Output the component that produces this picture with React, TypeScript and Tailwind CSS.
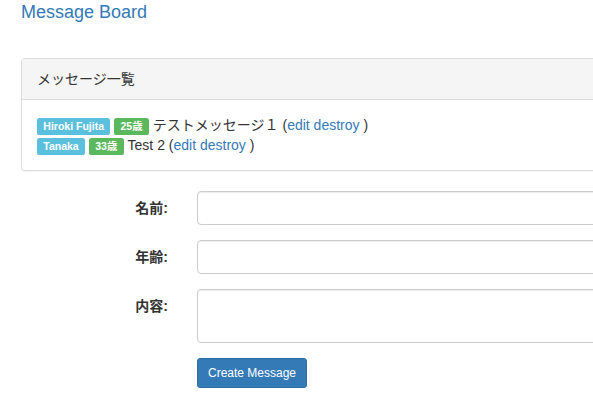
import React from "react";

const font = "font-['Liberation_Sans','Noto_Sans_CJK_JP',sans-serif]";

function Label({ color, children }: { color: string; children: React.ReactNode }) {
  return (
    <span
      className={`${color} inline text-white font-bold text-[10.5px] leading-none px-[6.3px] pt-[2.1px] pb-[3.15px] rounded-[2.6px] align-baseline`}
    >
      {children}
    </span>
  );
}

function Row({ label, children }: { label: string; children: React.ReactNode }) {
  return (
    <div className="flex mb-[15px]">
      <label className="w-[147px] shrink-0 text-right pt-[7px] font-bold">{label}</label>
      <div className="ml-[29px] shrink-0">{children}</div>
    </div>
  );
}

export default function App() {
  return (
    <div className={`w-[593px] h-[403px] overflow-hidden bg-white text-[14px] leading-[20px] text-[#333] ${font}`}>
      <div className="pl-[21px]">
        <h1 className="pt-[2px] text-[18px] leading-[20px] text-[#337ab7] font-normal">Message Board</h1>
        <div className="mt-[36px] mb-[20px] w-[640px] border border-[#ddd] rounded-[4px] shadow-[0_1px_1px_rgba(0,0,0,0.05)]">
          <div className="bg-[#f5f5f5] border-b border-[#ddd] px-[15px] py-[10px] rounded-t-[3px]">
            メッセージ一覧
          </div>
          <div className="p-[15px]">
            <div>
              <Label color="bg-[#5bc0de]">Hiroki Fujita</Label>{" "}
              <Label color="bg-[#5cb85c]">25歳</Label> テストメッセージ１ (
              <a className="text-[#337ab7]">edit</a> <a className="text-[#337ab7]">destroy</a> )
            </div>
            <div>
              <Label color="bg-[#5bc0de]">Tanaka</Label>{" "}
              <Label color="bg-[#5cb85c]">33歳</Label> Test 2 (
              <a className="text-[#337ab7]">edit</a> <a className="text-[#337ab7]">destroy</a> )
            </div>
          </div>
        </div>
        <form>
          <Row label="名前:">
            <input className="block w-[500px] h-[34px] border border-[#ccc] rounded-[4px] shadow-[inset_0_1px_1px_rgba(0,0,0,0.075)] px-[12px] outline-none" />
          </Row>
          <Row label="年齢:">
            <input className="block w-[500px] h-[34px] border border-[#ccc] rounded-[4px] shadow-[inset_0_1px_1px_rgba(0,0,0,0.075)] px-[12px] outline-none" />
          </Row>
          <Row label="内容:">
            <textarea
              rows={2}
              className="block w-[500px] h-[54px] border border-[#ccc] rounded-[4px] shadow-[inset_0_1px_1px_rgba(0,0,0,0.075)] px-[12px] py-[6px] outline-none resize-none"
            />
          </Row>
          <div className="ml-[176px]">
            <button
              type="button"
              className="bg-[#337ab7] border border-[#2e6da4] text-white text-[12px] leading-[18px] px-[10px] py-[5px] rounded-[3px]"
            >
              Create Message
            </button>
          </div>
        </form>
      </div>
    </div>
  );
}
